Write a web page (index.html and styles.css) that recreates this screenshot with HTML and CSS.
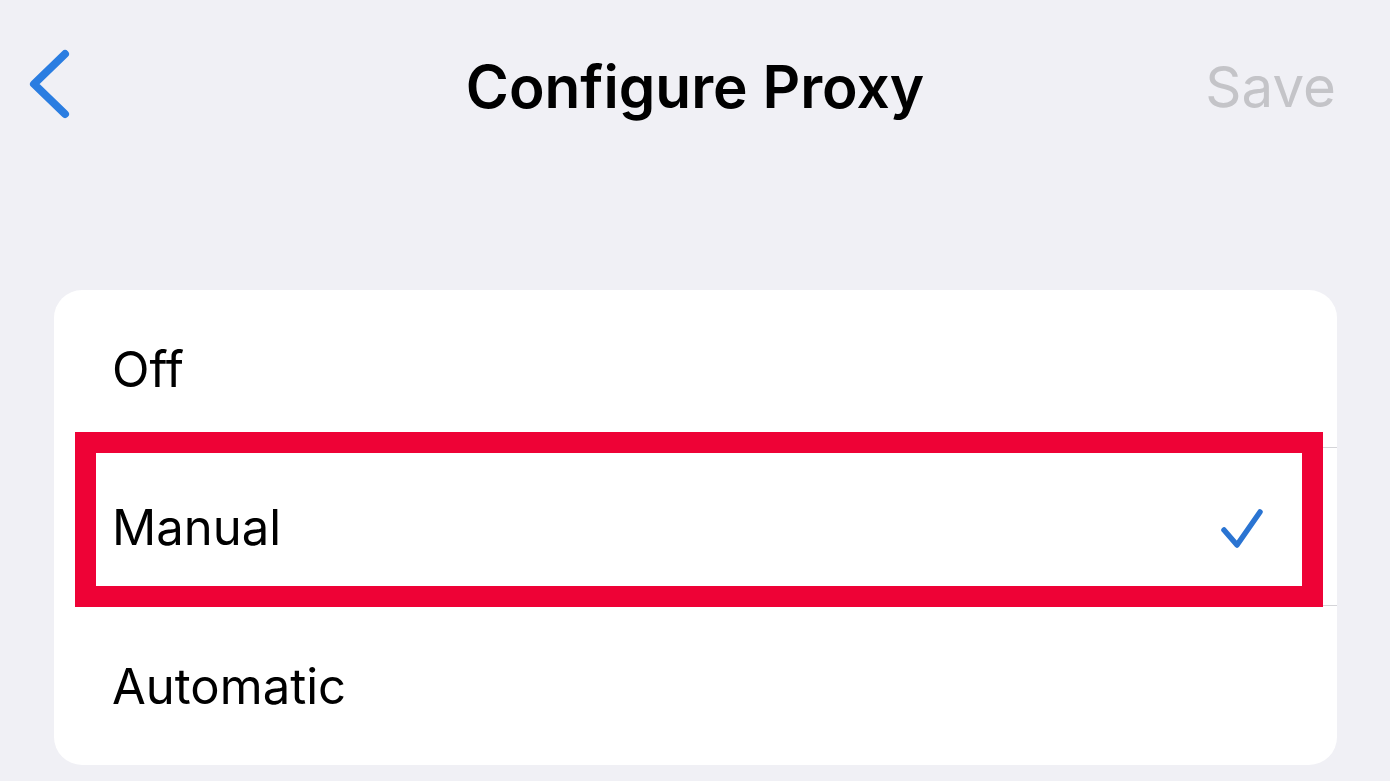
FILE: index.html
```html
<!DOCTYPE html>
<html lang="en">
<head>
<meta charset="utf-8">
<title>Configure Proxy</title>
<link rel="stylesheet" href="styles.css">
</head>
<body>
<div class="screen">
  <header class="nav">
    <div class="nav-side nav-left">
      <svg class="back" width="50" height="80" viewBox="0 0 50 80" aria-hidden="true">
        <path d="M37 7 L6 37 L37 67" fill="none" stroke="#2a7de1" stroke-width="8" stroke-linecap="round" stroke-linejoin="round"/>
      </svg>
    </div>
    <h1 class="title">Configure Proxy</h1>
    <div class="nav-side nav-right">
      <span class="save">Save</span>
    </div>
  </header>
  <section class="card">
    <div class="row"><span class="label">Off</span></div>
    <div class="sep"></div>
    <div class="row"><span class="label">Manual</span>
      <svg class="check" width="44" height="44" viewBox="0 0 44 44" aria-hidden="true">
        <path d="M5 24 L18 39 L41 6" fill="none" stroke="#2a74d2" stroke-width="5.5" stroke-linecap="round" stroke-linejoin="round"/>
      </svg>
    </div>
    <div class="sep"></div>
    <div class="row row-last"><span class="label">Automatic</span></div>
    <div class="highlight"></div>
  </section>
</div>
</body>
</html>
```

FILE: styles.css
```css
html, body {
  margin: 0;
  padding: 0;
}
body {
  background: #f0f0f5;
  font-family: Inter, "Liberation Sans", sans-serif;
  color: #000;
  width: 1390px;
  height: 781px;
  overflow: hidden;
}
.screen {
  display: flex;
  flex-direction: column;
}
.nav {
  height: 174px;
  display: flex;
  align-items: center;
  justify-content: space-between;
  padding: 0 54px 0 28px;
}
.nav-side {
  display: flex;
  align-items: center;
}
.nav-left {
  width: 186px;
}
.nav-right {
  width: 160px;
  justify-content: flex-end;
}
.back {
  display: block;
}
.title {
  margin: 0;
  font-size: 58.5px;
  font-weight: 600;
  line-height: 1;
}
.save {
  font-size: 56.5px;
  color: #c4c4c8;
  line-height: 1;
}
.card {
  position: relative;
  margin: 116px 53px 0 54px;
  background: #fff;
  border-radius: 28px;
  display: flex;
  flex-direction: column;
}
.row {
  height: 157px;
  display: flex;
  align-items: center;
  justify-content: space-between;
  padding: 2px 74px 0 58px;
  box-sizing: border-box;
}
.row-last {
  height: 159px;
}
.label {
  font-size: 49px;
  line-height: 1;
}
.sep {
  height: 1px;
  margin-left: 59px;
  background: #d4d4d8;
}
.check {
  display: block;
}
.highlight {
  position: absolute;
  left: 21px;
  top: 142px;
  width: 1206px;
  height: 133px;
  border: 21px solid #ee0236;
}
```
